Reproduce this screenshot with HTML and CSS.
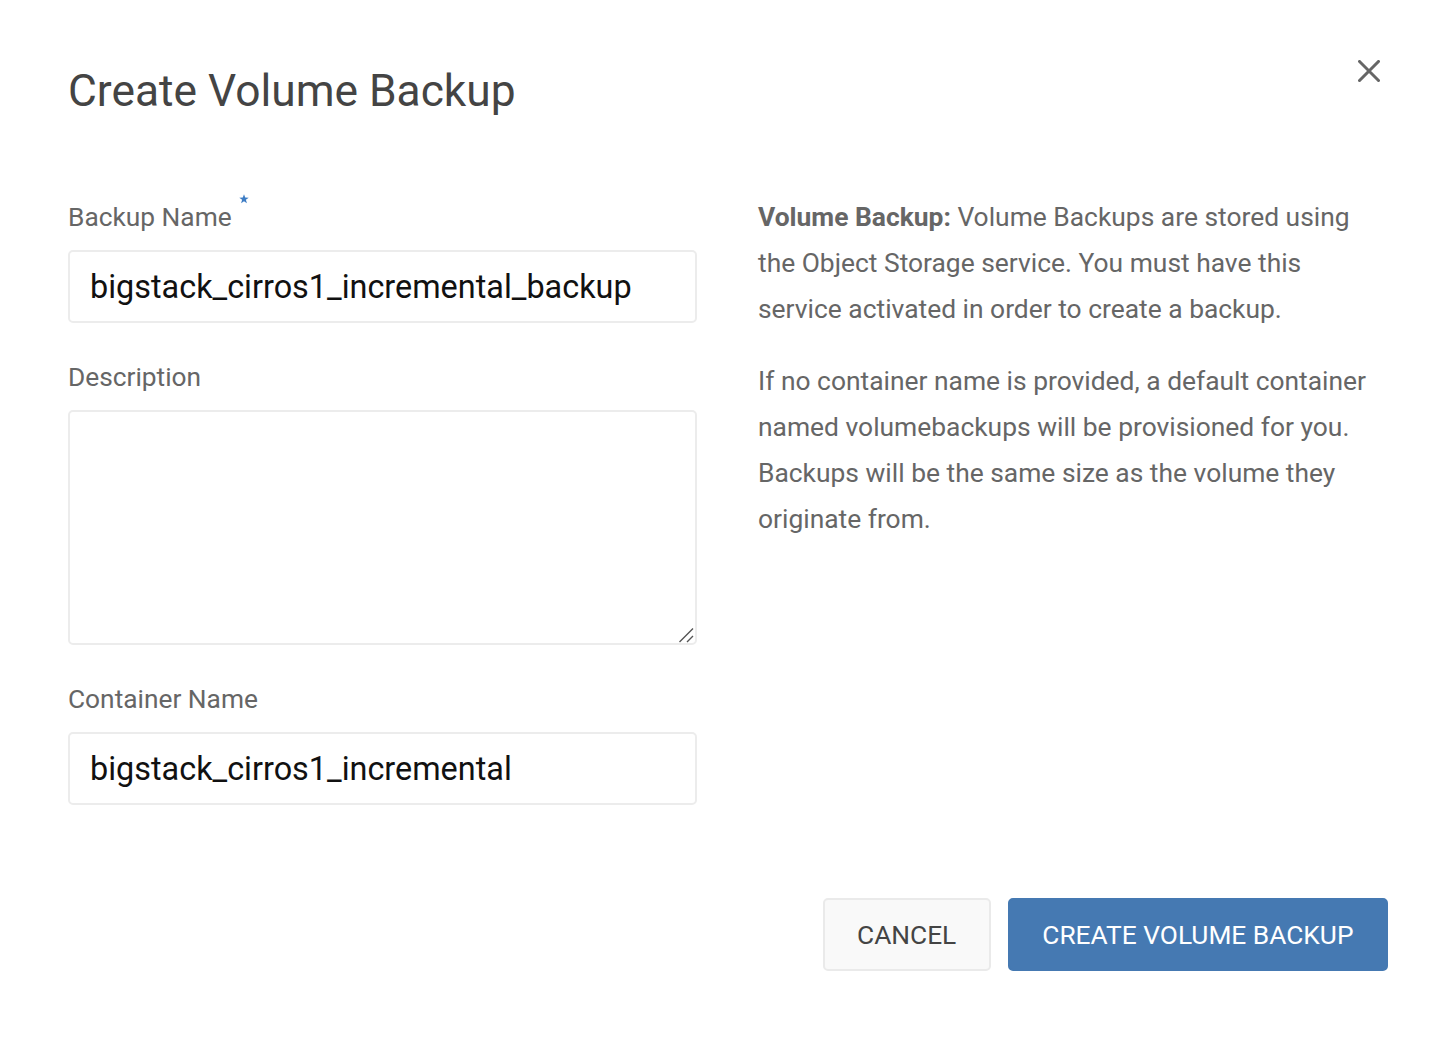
FILE: index.html
```html
<!DOCTYPE html>
<html lang="en">
<head>
<meta charset="utf-8">
<title>Create Volume Backup</title>
<link rel="stylesheet" href="styles.css">
</head>
<body>
<div class="dialog">
  <header class="dialog-header">
    <h1 class="dialog-title">Create Volume Backup</h1>
    <button class="close-btn" type="button" aria-label="Close">
      <svg width="22" height="22" viewBox="0 0 22 22" aria-hidden="true">
        <path d="M1.5 1.5 L20.5 20.5 M20.5 1.5 L1.5 20.5" stroke="#666" stroke-width="3" stroke-linecap="square" fill="none"/>
      </svg>
    </button>
  </header>

  <div class="dialog-body">
    <form class="form-col">
      <div class="field">
        <label class="field-label">Backup Name<svg class="required" width="10" height="10" viewBox="0 0 10 10" aria-hidden="true"><path d="M5 0.3 L6.2 3.6 L9.7 3.7 L6.9 5.8 L7.9 9.3 L5 7.2 L2.1 9.3 L3.1 5.8 L0.3 3.7 L3.8 3.6 Z" fill="#3d7cc4"/></svg></label>
        <input class="field-input" type="text" value="bigstack_cirros1_incremental_backup">
      </div>
      <div class="field">
        <label class="field-label">Description</label>
        <div class="textarea-wrap">
          <textarea class="field-textarea"></textarea>
          <svg class="resize-grip" width="16" height="16" viewBox="0 0 16 16" aria-hidden="true">
            <path d="M1.5 15 L15 1.5 M9 15 L15 9" stroke="#555" stroke-width="1.4" fill="none"/>
          </svg>
        </div>
      </div>
      <div class="field">
        <label class="field-label">Container Name</label>
        <input class="field-input" type="text" value="bigstack_cirros1_incremental">
      </div>
    </form>

    <div class="help-col">
      <p><strong>Volume Backup:</strong> Volume Backups are stored using the Object Storage service. You must have this service activated in order to create a backup.</p>
      <p>If no container name is provided, a default container named volumebackups will be provisioned for you. Backups will be the same size as the volume they originate from.</p>
    </div>
  </div>

  <footer class="dialog-footer">
    <button class="btn btn-default" type="button">Cancel</button>
    <button class="btn btn-primary" type="button">Create Volume Backup</button>
  </footer>
</div>
</body>
</html>
```

FILE: styles.css
```css
* { box-sizing: border-box; }

html, body {
  margin: 0;
  background: #fff;
}

body {
  font-family: Roboto, "Liberation Sans", Arial, sans-serif;
  color: #444;
}

.dialog {
  padding: 50px 64px 0 68px;
}

.dialog-header {
  display: flex;
  justify-content: space-between;
  align-items: flex-start;
  height: 150px;
}

.dialog-title {
  margin: 15px 0 0;
  font-size: 44.3px;
  font-weight: 400;
  line-height: 52px;
  color: #444;
}

.close-btn {
  margin: 10px 8px 0 0;
  padding: 0;
  border: 0;
  background: none;
  width: 22px;
  height: 22px;
  cursor: pointer;
}

.close-btn svg { display: block; }

.dialog-body {
  display: grid;
  grid-template-columns: 629px 1fr;
  column-gap: 61px;
}

.field { margin-bottom: 37px; }

.field-label {
  display: block;
  font-size: 26.3px;
  line-height: 34px;
  color: #666;
  margin-bottom: 16px;
}

.required {
  position: relative;
  top: -22px;
  left: 7px;
  vertical-align: baseline;
}

.field-input,
.field-textarea {
  display: block;
  width: 100%;
  border: 2px solid #ececec;
  border-radius: 5px;
  background: #fff;
  font-family: Roboto, "Liberation Sans", Arial, sans-serif;
  color: #111;
  outline: none;
}

.field-input {
  height: 73px;
  padding: 0 20px;
  font-size: 32.4px;
}

.textarea-wrap {
  position: relative;
}

.field-textarea {
  height: 235px;
  padding: 12px 20px;
  font-size: 26px;
  resize: none;
}

.resize-grip {
  position: absolute;
  right: 3px;
  bottom: 2px;
  display: block;
}

.help-col {
  margin-top: -6px;
  font-size: 26.4px;
  line-height: 46px;
  color: #666;
}

.help-col p { margin: 0 0 26px; }

.help-col strong { font-weight: 700; }

.dialog-footer {
  display: flex;
  justify-content: flex-end;
  gap: 17px;
  margin-top: 56px;
}

.btn {
  height: 73px;
  padding: 0 32.5px;
  border-radius: 5px;
  font-family: Roboto, "Liberation Sans", Arial, sans-serif;
  font-size: 26.3px;
  text-transform: uppercase;
  cursor: pointer;
}

.btn-default {
  background: #f9f9f9;
  border: 2px solid #eaeaea;
  color: #444;
}

.btn-primary {
  background: #4579b2;
  border: 2px solid #4579b2;
  color: #fff;
}
```
